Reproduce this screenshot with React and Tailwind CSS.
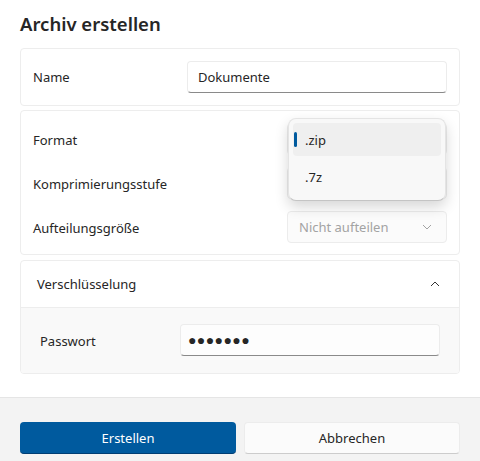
import React from "react";

function Chevron({ up, className }) {
  return (
    <svg width="12" height="12" viewBox="0 0 12 12" fill="none" className={className}>
      <path d={up ? "M2 8 L6 4 L10 8" : "M2 4 L6 8 L10 4"} stroke="currentColor" strokeWidth="1" />
    </svg>
  );
}

function Row({ label, children }) {
  return (
    <div className="flex h-8 items-center justify-between">
      <span className="pt-[4px]">{label}</span>
      {children}
    </div>
  );
}

function Select({ value, disabled }) {
  return (
    <div className={"flex h-8 w-40 items-center justify-between rounded border border-[#ececec] pl-[11px] pr-[13px] " + (disabled ? "bg-[#fbfbfb] text-[#a3a3a3]" : "bg-white text-[#1b1b1b]")}>
      <span className="pt-[2px]">{value}</span>
      <Chevron className="text-[#a3a3a3]" />
    </div>
  );
}

export default function App() {
  return (
    <div className="relative flex h-[461px] w-[480px] flex-col overflow-hidden bg-white font-['Noto_Sans','Open_Sans',sans-serif] text-[13px] text-[#262626]">
      <div className="flex flex-1 flex-col px-5">
        <h1 className="mt-[10px] h-[38px] text-[18.5px] leading-[28px] font-semibold">Archiv erstellen</h1>
        <div className="flex h-[58px] items-center justify-between rounded border border-[#ededed] pl-3 pr-[12px]">
          <span className="pt-[2px]">Name</span>
          <div className="flex h-8 w-[260px] items-center rounded border border-[#ececec] border-b-[#8a8a8a] bg-white pl-[10px] pt-[2px]">Dokumente</div>
        </div>
        <div className="relative mt-1 flex h-[145px] flex-col gap-3 rounded border border-[#ededed] pl-3 pr-[12px] pt-[12px]">
          <Row label="Format"><Select /></Row>
          <Row label="Komprimierungsstufe"><Select /></Row>
          <Row label="Aufteilungsgröße"><Select value="Nicht aufteilen" disabled /></Row>
          <div className="absolute left-[267px] top-[7px] flex h-[83px] w-[158px] flex-col gap-[3px] rounded-lg border border-[#e4e4e4] border-b-[#c4c4c4] bg-[#f8f8f8] p-1 shadow-[0_6px_14px_rgba(0,0,0,0.16)]">
            <div className="relative flex h-[33px] items-center rounded bg-[#efefef] pl-3 pt-[2px]">
              <div className="absolute left-px top-[9px] h-[15px] w-[3px] rounded-sm bg-[#005a9e]" />
              .zip
            </div>
            <div className="flex h-[34px] items-center pl-3 pt-[3px]">.7z</div>
          </div>
        </div>
        <div className="mt-[5px] h-[114px] overflow-hidden rounded border border-[#ededed]">
          <div className="flex h-[47px] items-center justify-between border-b border-[#ededed] pl-4 pr-[18px]">
            <span className="pt-[2px]">Verschlüsselung</span>
            <Chevron up className="text-[#333333]" />
          </div>
          <div className="flex h-[65px] items-center justify-between bg-[#f9f9f9] pb-[2px] pl-[19px] pr-[19px]">
            <span className="pt-[5px]">Passwort</span>
            <div className="flex h-8 w-[260px] items-center rounded border border-[#ececec] border-b-[#8a8a8a] bg-[#fdfdfd] pl-[7px] text-[14px] tracking-[0.4px]">●●●●●●●</div>
          </div>
        </div>
      </div>
      <div className="flex h-[64px] gap-2 border-t border-[#e5e5e5] bg-[#f3f3f3] px-5 pt-6">
        <button className="flex h-8 w-[216px] items-center justify-center rounded border-b border-[#003e73] bg-[#005a9e] pt-[2px] text-white">Erstellen</button>
        <button className="flex h-8 w-[216px] items-center justify-center rounded border border-[#ececec] border-b-[#cccccc] bg-[#fbfbfb] pt-[2px]">Abbrechen</button>
      </div>
    </div>
  );
}
